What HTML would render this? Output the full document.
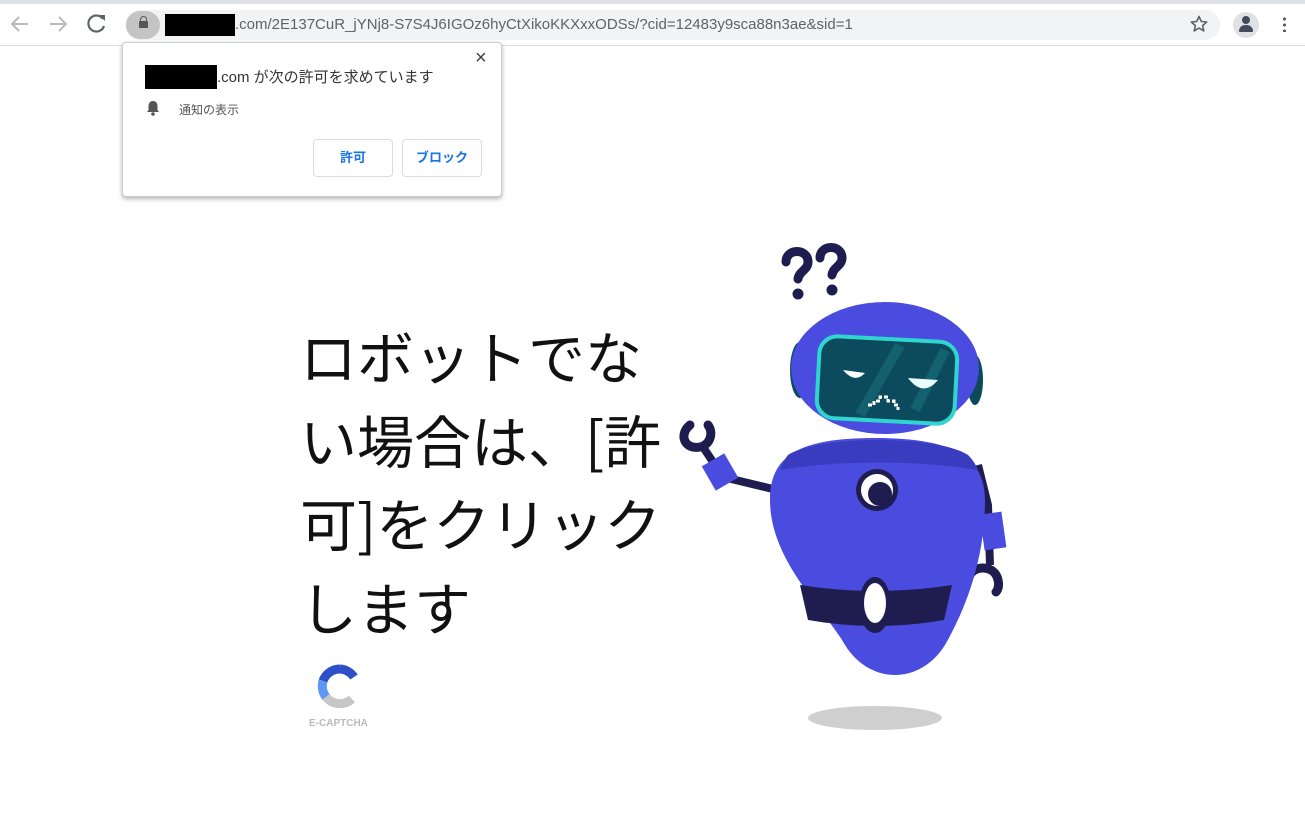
<!DOCTYPE html>
<html><head><meta charset="utf-8"><style>
body{margin:0;width:1305px;height:836px;background:#fff;position:relative;overflow:hidden;font-family:"Liberation Sans","Noto Sans CJK JP",sans-serif}
.top{position:absolute;left:0;top:0;width:1305px;height:4px;background:#dee1e6}
.bar{position:absolute;left:0;top:4px;width:1305px;height:41px;background:#fff;border-bottom:1px solid #dadce0}
.omni{position:absolute;left:125px;top:10px;width:1095px;height:30px;border-radius:15px;background:#f1f3f4}
.url{position:absolute;left:235px;top:16px;font-size:15px;color:#5f6368}
.pop{position:absolute;left:122px;top:42px;width:378px;height:153px;background:#fff;border:1px solid #ccc;border-radius:4px;box-shadow:0 2px 5px rgba(0,0,0,.3)}
.btn{position:absolute;top:96px;height:36px;border:1px solid #dadce0;border-radius:4px;color:#1a73e8;font-size:13px;text-align:center;line-height:36px;font-weight:bold}
.main{position:absolute;left:300px;top:314px;font-size:57px;line-height:83.5px;color:#111;font-family:"Noto Sans CJK JP",sans-serif;font-weight:400;white-space:nowrap}
</style></head><body>
<div class="top"></div><div class="bar"></div>
<svg style="position:absolute;left:0;top:0" width="120" height="46"><g stroke="#bbb" stroke-width="2" fill="none"><path d="M28 24H12M19 17l-7 7 7 7"/></g><g stroke="#bbb" stroke-width="2" fill="none"><path d="M50 24h16M59 17l7 7-7 7"/></g><path d="M103 19a8 8 0 1 0 1 7" stroke="#5f6368" stroke-width="2.2" fill="none"/><path d="M99 15h6v6z" fill="#5f6368"/></svg>
<div class="omni"></div>
<div style="position:absolute;left:126px;top:11px;width:34px;height:28px;border-radius:14px;background:#c4c4c4"></div>
<div style="position:absolute;left:139px;top:21px;width:9px;height:7px;background:#555;border-radius:1px"></div>
<div style="position:absolute;left:140px;top:16px;width:5px;height:6px;border:1.5px solid #555;border-bottom:none;border-radius:4px 4px 0 0"></div>
<div style="position:absolute;left:165px;top:14px;width:70px;height:22px;background:#000"></div>
<div class="url">.com/2E137CuR_jYNj8-S7S4J6IGOz6hyCtXikoKKXxxODSs/?cid=12483y9sca88n3ae&amp;sid=1</div>
<svg style="position:absolute;left:1190px;top:15px" width="18" height="18"><path d="M9 1.5l2.3 5 5.4.5-4.1 3.6 1.2 5.3L9 13.1 4.2 15.9l1.2-5.3L1.3 7l5.4-.5z" fill="none" stroke="#5f6368" stroke-width="1.6" stroke-linejoin="round"/></svg>
<div style="position:absolute;left:1233px;top:12px;width:26px;height:26px;border-radius:13px;background:#dfe1e5"></div>
<div style="position:absolute;left:1242px;top:16px;width:8px;height:8px;border-radius:4px;background:#444a5c"></div>
<div style="position:absolute;left:1239px;top:25px;width:14px;height:7px;border-radius:7px 7px 1px 1px;background:#444a5c"></div>
<div style="position:absolute;left:1283px;top:16px;width:3px;height:16px;background:radial-gradient(circle,#555 1.4px,transparent 1.6px) 0 0/3px 6px"></div>
<div class="pop">
<div style="position:absolute;left:352px;top:4px;font-size:20px;color:#444">×</div>
<div style="position:absolute;left:22px;top:22px;width:72px;height:24px;background:#000"></div>
<div style="position:absolute;left:94px;top:23px;font-size:15px;color:#333">.com が次の許可を求めています</div>
<svg style="position:absolute;left:22px;top:56px" width="16" height="18"><path d="M8 2c-3 0-4.5 2.5-4.5 5v4L2 13h12l-1.5-2V7C12.5 4.5 11 2 8 2z" fill="#555"/><circle cx="8" cy="15" r="1.8" fill="#555"/></svg>
<div style="position:absolute;left:56px;top:58px;font-size:12px;color:#555">通知の表示</div>
<div class="btn" style="left:190px;width:78px">許可</div>
<div class="btn" style="left:279px;width:78px">ブロック</div>
</div>
<div class="main">ロボットでな<br>い場合は、[許<br>可]をクリック<br>します</div>
<svg style="position:absolute;left:310px;top:662px" width="60" height="50"><path d="M30 7a18 18 0 0 0-17 12" stroke="#2e4fc7" stroke-width="9" fill="none"/><path d="M13 19a18 18 0 0 0 3 16" stroke="#5c97f2" stroke-width="9" fill="none"/><path d="M16 35a18 18 0 0 0 26 2" stroke="#c6c6c6" stroke-width="9" fill="none"/><path d="M30 7a18 18 0 0 1 14 8" stroke="#2e4fc7" stroke-width="9" fill="none"/></svg>
<div style="position:absolute;left:309px;top:718px;font-size:10px;color:#bbb;font-weight:bold">E-CAPTCHA</div>
<svg style="position:absolute;left:0;top:0" width="1305" height="836">
<ellipse cx="875" cy="718" rx="67" ry="12" fill="#cfcfcf"/>
<g stroke="#1f1d4f" stroke-width="9" fill="none" stroke-linecap="round"><path d="M786 262c0-14 22-14 22 0 0 8-9 9-10 17"/><path d="M820 258c0-14 22-14 22 0 0 8-9 9-10 17"/></g>
<circle cx="798" cy="294" r="5.5" fill="#1f1d4f"/><circle cx="832" cy="290" r="5.5" fill="#1f1d4f"/>
<path d="M690 425c-12 10-5 25 10 22 10-2 14-14 8-22" stroke="#1f1d4f" stroke-width="9" fill="none" stroke-linecap="round"/>
<path d="M703 447l20 30 50 12" stroke="#1f1d4f" stroke-width="8" fill="none"/>
<rect x="707" y="458" width="26" height="28" fill="#4a4ce0" transform="rotate(-30 720 472)"/>
<path d="M978 465l10 40 2 60" stroke="#1f1d4f" stroke-width="8" fill="none"/>
<rect x="982" y="513" width="22" height="36" fill="#4a4ce0" transform="rotate(-8 993 531)"/>
<path d="M970 575c5-10 25-10 28 5 2 8-2 12-2 12" stroke="#1f1d4f" stroke-width="9" fill="none" stroke-linecap="round"/>
<path d="M770 500c0-45 30-62 105-62s110 17 110 62c0 60-20 110-40 145-25 40-75 40-100 0-22-38-75-85-75-145z" fill="#4a4ce0"/>
<path d="M788 455c30-20 150-20 180 0 5 5 8 10 10 15-60-10-140-10-198 0 2-5 4-10 8-15z" fill="#3a3cc0"/>
<path d="M800 585q75 12 152 0l-8 35q-68 12-136 0z" fill="#1f1d4f"/>
<ellipse cx="875" cy="605" rx="16" ry="28" fill="#1f1d4f"/>
<ellipse cx="875" cy="603" rx="11" ry="20" fill="#fff"/>
<circle cx="877" cy="490" r="21" fill="#1f1d4f"/><circle cx="877" cy="490" r="16" fill="#fff"/><circle cx="880" cy="494" r="12" fill="#1f1d4f"/>
<ellipse cx="800" cy="370" rx="10" ry="28" fill="#0b4a5a"/>
<ellipse cx="975" cy="380" rx="8" ry="25" fill="#0b4a5a"/>
<ellipse cx="885" cy="368" rx="94" ry="66" fill="#4a4ce0"/>
<rect x="818" y="339" width="138" height="82" rx="18" fill="#0c4a5d" stroke="#2fd6d0" stroke-width="4" transform="rotate(3 887 380)"/>
<path d="M900 345l-40 70M945 350l-30 60" stroke="#13606f" stroke-width="10"/>
<path d="M843 370q12 14 22 3z" fill="#fff"/><path d="M908 378q15 20 30 2z" fill="#e8fbff"/>
<path d="M868 405h6v-4h6v-4h8v4h6v4h4v5" stroke="#fff" stroke-width="3" fill="none" stroke-dasharray="4 2"/>
</svg>
</body></html>
